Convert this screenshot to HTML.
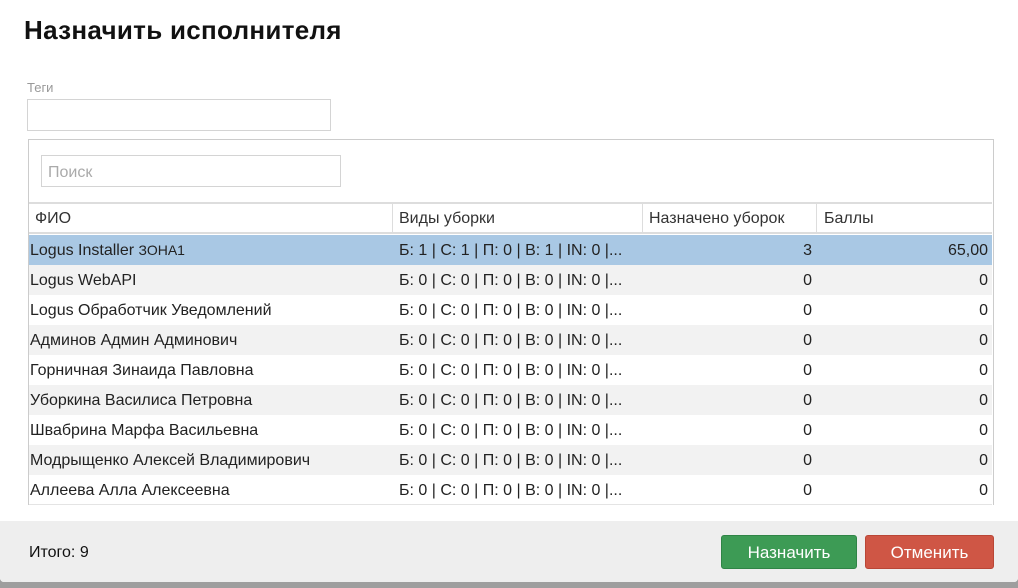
<!DOCTYPE html>
<html><head><meta charset="utf-8"><style>
*{margin:0;padding:0;box-sizing:border-box}
html,body{width:1018px;height:588px;overflow:hidden}
body{background:#9e9e9e;font-family:"Liberation Sans","DejaVu Sans",sans-serif;position:relative}
.modal{position:absolute;left:0;top:0;width:1018px;height:582px;background:#fff;border-radius:0 0 4px 4px;overflow:hidden}
h1{position:absolute;left:24px;top:15px;font-size:26px;font-weight:bold;color:#111;letter-spacing:0.3px}
.lbl{position:absolute;left:27px;top:80px;font-size:13px;color:#999}
.inp{position:absolute;border:1px solid #d4d4d4;background:#fff}
.tbl{position:absolute;left:28px;top:139px;width:966px;height:366px;border:1px solid #ccc;border-bottom:none}
.row{position:absolute;left:29px;width:963px;height:30px;font-size:16px;color:#222}
.row span{position:absolute;top:7px;white-space:nowrap}
.hd{position:absolute;left:29px;top:202px;width:963px;height:32px;border-top:2px solid #ddd;border-bottom:2px solid #ddd;font-size:16px;color:#333}
.hd span{position:absolute;top:6px}
.sep{position:absolute;top:0;height:28px;border-left:1px solid #ddd}
.footer{position:absolute;left:0;top:521px;width:1018px;height:61px;background:#eeeeee}
.btn{position:absolute;top:535px;height:34px;border-radius:3px;color:#fff;font-size:17px;text-align:center;line-height:34px}
</style></head><body>
<div class="modal">
<h1>Назначить исполнителя</h1>
<div class="lbl">Теги</div>
<div class="inp" style="left:27px;top:99px;width:304px;height:32px"></div>
<div class="tbl"></div>
<div class="inp" style="left:41px;top:155px;width:300px;height:32px"></div>
<div style="position:absolute;left:48px;top:164px;font-size:16px;color:#aaa">Поиск</div>
<div class="hd"><span style="left:6px">ФИО</span><div class="sep" style="left:363px"></div><span style="left:370px">Виды уборки</span><div class="sep" style="left:613px"></div><span style="left:620px">Назначено уборок</span><div class="sep" style="left:787px"></div><span style="left:795px">Баллы</span></div>

<div class="row" style="top:235px;background:#a9c8e4"><span style="left:1px">Logus Installer <small style="font-size:14px">ЗОНА1</small></span><span style="left:370px">Б: 1 | С: 1 | П: 0 | В: 1 | IN: 0 |...</span><span style="right:180px">3</span><span style="right:4px">65,00</span></div>
<div class="row" style="top:265px;background:#f2f2f2"><span style="left:1px">Logus WebAPI</span><span style="left:370px">Б: 0 | С: 0 | П: 0 | В: 0 | IN: 0 |...</span><span style="right:180px">0</span><span style="right:4px">0</span></div>
<div class="row" style="top:295px"><span style="left:1px">Logus Обработчик Уведомлений</span><span style="left:370px">Б: 0 | С: 0 | П: 0 | В: 0 | IN: 0 |...</span><span style="right:180px">0</span><span style="right:4px">0</span></div>
<div class="row" style="top:325px;background:#f2f2f2"><span style="left:1px">Админов Админ Админович</span><span style="left:370px">Б: 0 | С: 0 | П: 0 | В: 0 | IN: 0 |...</span><span style="right:180px">0</span><span style="right:4px">0</span></div>
<div class="row" style="top:355px"><span style="left:1px">Горничная Зинаида Павловна</span><span style="left:370px">Б: 0 | С: 0 | П: 0 | В: 0 | IN: 0 |...</span><span style="right:180px">0</span><span style="right:4px">0</span></div>
<div class="row" style="top:385px;background:#f2f2f2"><span style="left:1px">Уборкина Василиса Петровна</span><span style="left:370px">Б: 0 | С: 0 | П: 0 | В: 0 | IN: 0 |...</span><span style="right:180px">0</span><span style="right:4px">0</span></div>
<div class="row" style="top:415px"><span style="left:1px">Швабрина Марфа Васильевна</span><span style="left:370px">Б: 0 | С: 0 | П: 0 | В: 0 | IN: 0 |...</span><span style="right:180px">0</span><span style="right:4px">0</span></div>
<div class="row" style="top:445px;background:#f2f2f2"><span style="left:1px">Модрыщенко Алексей Владимирович</span><span style="left:370px">Б: 0 | С: 0 | П: 0 | В: 0 | IN: 0 |...</span><span style="right:180px">0</span><span style="right:4px">0</span></div>
<div class="row" style="top:475px;border-bottom:1px solid #e4e4e4"><span style="left:1px">Аллеева Алла Алексеевна</span><span style="left:370px">Б: 0 | С: 0 | П: 0 | В: 0 | IN: 0 |...</span><span style="right:180px">0</span><span style="right:4px">0</span></div>

<div class="footer"></div>
<div style="position:absolute;left:29px;top:544px;font-size:16px;color:#111">Итого: 9</div>
<div class="btn" style="left:721px;width:136px;background:#3d9b55;border:1px solid #2f8446">Назначить</div>
<div class="btn" style="left:865px;width:129px;background:#cf5645;border:1px solid #b94636">Отменить</div>
</div>
</body></html>
